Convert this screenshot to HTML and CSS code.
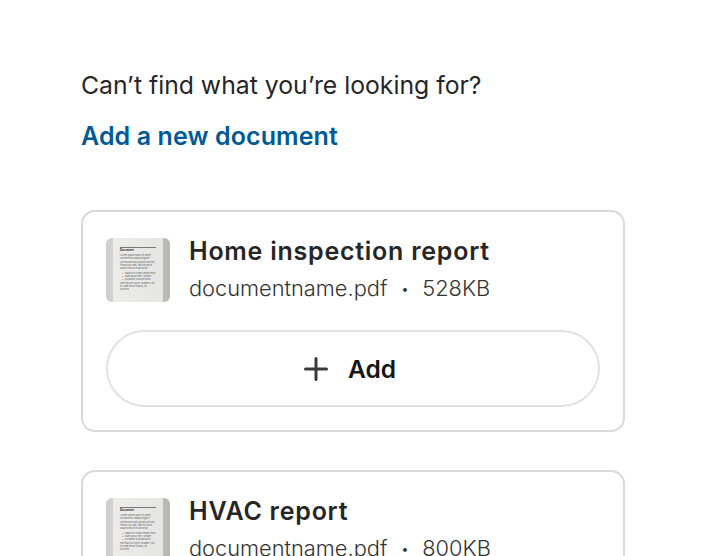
FILE: index.html
```html
<!DOCTYPE html>
<html lang="en">
<head>
<meta charset="utf-8">
<title>Documents</title>
<link rel="stylesheet" href="styles.css">
</head>
<body>
<main class="page">
  <p class="prompt">Can’t find what you’re looking for?</p>
  <a class="new-link" href="#">Add a new document</a>
  <section class="list">
    <article class="card">
      <div class="doc">
        <div class="thumb">
          <div class="sheet">
            <div class="sheet-title">Document</div>
            <p>Lorem ipsum dolor sit amet, consectetur adipiscing elit.</p>
            <p>Vestibulum quis ipsum ultrices, finibus dui sed, facilisis eros. Mauris mollis nulla tortor.</p>
            <ul><li>Mauris id turpis mattis eros</li><li>Nam lacus velit, ornare</li><li>Curabitur suscipit arcu</li></ul>
            <p>Sed facilisis tortor sodales, nisi id vitae tellus finibus, ac ultricies.</p>
          </div>
        </div>
        <div class="info">
          <h2 class="title">Home inspection report</h2>
          <div class="meta"><span>documentname.pdf</span><span class="dot">•</span><span>528KB</span></div>
        </div>
      </div>
      <button class="add" type="button">
        <svg class="plus" viewBox="0 0 24 24" width="24" height="24" aria-hidden="true"><path d="M12 1.5v21M1.5 12h21" fill="none" stroke="#3a3a3a" stroke-width="3" stroke-linecap="round"/></svg>
        <span>Add</span>
      </button>
    </article>
    <article class="card">
      <div class="doc">
        <div class="thumb">
          <div class="sheet">
            <div class="sheet-title">Document</div>
            <p>Lorem ipsum dolor sit amet, consectetur adipiscing elit.</p>
            <p>Vestibulum quis ipsum ultrices, finibus dui sed, facilisis eros. Mauris mollis nulla tortor.</p>
            <ul><li>Mauris id turpis mattis eros</li><li>Nam lacus velit, ornare</li><li>Curabitur suscipit arcu</li></ul>
            <p>Sed facilisis tortor sodales, nisi id vitae tellus finibus, ac ultricies.</p>
          </div>
        </div>
        <div class="info">
          <h2 class="title">HVAC report</h2>
          <div class="meta"><span>documentname.pdf</span><span class="dot">•</span><span>800KB</span></div>
        </div>
      </div>
    </article>
  </section>
</main>
</body>
</html>
```
FILE: styles.css
```css
* { box-sizing: border-box; }
html, body { margin: 0; height: 100%; overflow: hidden; background: #fff; }
body { font-family: Inter, "Liberation Sans", sans-serif; color: #262626; }
.page { padding: 70px 81px 0; width: 706px; }
.prompt { margin: 0; font-size: 24.75px; line-height: 30px; font-weight: 400; }
.new-link { display: block; margin-top: 21px; font-size: 25px; line-height: 30px; font-weight: 600; letter-spacing: 0.1px; color: #005a96; text-decoration: none; }
.list { margin-top: 59px; display: flex; flex-direction: column; gap: 38px; }
.card { width: 544px; border: 2px solid #d9d9d9; border-radius: 14px; padding: 26px 23px 23px; background: #fff; }
.doc { display: flex; align-items: center; gap: 19px; }
.thumb { width: 64px; height: 64px; flex: none; border-radius: 6px; background: linear-gradient(90deg, #cfcdc9 0, #d4d3cf 12%, #bdbcb7 88%, #b7b6b1 100%); display: flex; justify-content: center; overflow: hidden; }
.sheet { width: 50px; height: 64px; background: linear-gradient(90deg, #ececeb, #e5e5e4); padding: 9px 7px 0; font-size: 2.4px; line-height: 3px; color: #5c5c58; }
.sheet p { margin: 1.5px 0 0; }
.sheet ul { margin: 1.5px 0 0; padding: 0 0 0 2px; list-style: none; }
.sheet li::before { content: "•"; margin-right: 1.5px; }
.sheet-title { font-size: 2.8px; font-weight: 700; color: #222; border-top: 0.5px solid #777; padding-top: 1px; }
.info { min-width: 0; }
.title { margin: 0; font-size: 25px; line-height: 27px; font-weight: 600; letter-spacing: 0.75px; color: #262626; }
.meta { margin-top: 10px; display: flex; gap: 13.5px; font-size: 21.8px; line-height: 27px; font-weight: 300; color: #333; }
.dot { font-size: 14px; }
.add { margin-top: 28px; width: 494px; height: 77px; padding: 0 6px 0 0; border: 2px solid #e2e2e2; border-radius: 39px; background: #fff; display: flex; align-items: center; justify-content: center; gap: 20px; font: 600 24.5px/30px Inter, "Liberation Sans", sans-serif; color: #161616; }
.plus { flex: none; }
```
